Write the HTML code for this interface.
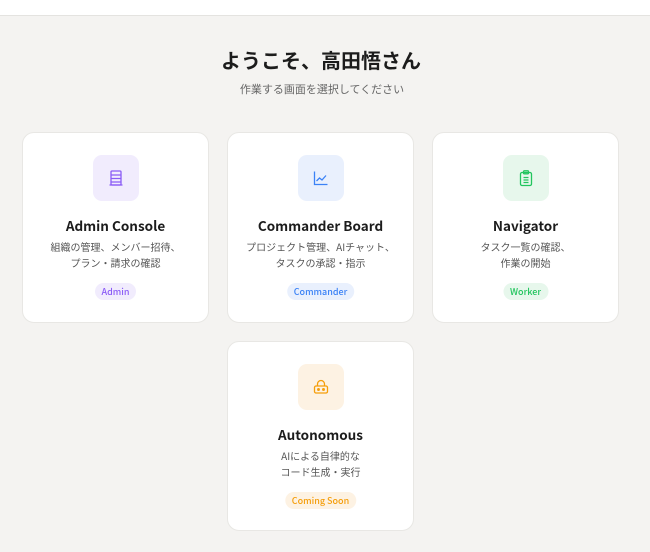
<!DOCTYPE html>
<html><head><meta charset="utf-8"><style>
*{box-sizing:border-box;margin:0;padding:0}
body{width:650px;height:552px;background:#f4f3f1;font-family:"Noto Sans CJK JP","Liberation Sans",sans-serif;position:relative;overflow:hidden}
.top{position:absolute;left:0;top:0;width:650px;height:16px;background:#fff;border-bottom:1px solid #e4e3e0}
h1{position:absolute;top:46px;left:-4px;width:650px;text-align:center;font-size:20px;font-weight:bold;color:#1c1c1c;line-height:28px}
.sub{position:absolute;top:81px;left:-3px;width:650px;text-align:center;font-size:11px;color:#666;line-height:16px}
.card{position:absolute;width:187px;height:191px;background:#fff;border:1px solid #e8e7e4;border-radius:12px;text-align:center}
.ic{position:absolute;left:70px;top:22px;width:46px;height:46px;border-radius:9px;display:flex;align-items:center;justify-content:center}
.t{position:absolute;top:82px;left:0;width:100%;font-size:13.5px;font-weight:bold;color:#1c1c1c;line-height:20px}
.d{position:absolute;top:106px;left:0;width:100%;font-size:10px;color:#555;line-height:16px}
.b{position:absolute;top:150px;left:50%;transform:translateX(-50%);font-size:9px;font-weight:500;padding:0 7px;height:17px;line-height:17px;border-radius:9px;white-space:nowrap}
</style></head><body>
<div class="top"></div>
<h1>ようこそ、高田悟さん</h1>
<div class="sub">作業する画面を選択してください</div>

<div class="card" style="left:22px;top:132px">
<div class="ic" style="background:#f1ecfd"><svg width="18" height="18" viewBox="0 0 18 18" fill="none" stroke="#8b5cf6" stroke-width="1.3"><rect x="4" y="2" width="10" height="14" rx="1"/><path d="M4 6h10M4 9.5h10M4 13h10M2.5 16h13"/></svg></div>
<div class="t">Admin Console</div>
<div class="d">組織の管理、メンバー招待、<br>プラン・請求の確認</div>
<div class="b" style="background:#f1ecfd;color:#8b5cf6">Admin</div>
</div>

<div class="card" style="left:227px;top:132px">
<div class="ic" style="background:#e9f0fd"><svg width="18" height="18" viewBox="0 0 18 18" fill="none" stroke="#3b82f6" stroke-width="1.3"><path d="M2.5 2.5v13h13"/><path d="M4.5 12l3-3 2.5 2 4-4.5"/></svg></div>
<div class="t">Commander Board</div>
<div class="d">プロジェクト管理、AIチャット、<br>タスクの承認・指示</div>
<div class="b" style="background:#e9f0fd;color:#3b82f6">Commander</div>
</div>

<div class="card" style="left:432px;top:132px">
<div class="ic" style="background:#e7f7ec"><svg width="18" height="18" viewBox="0 0 18 18" fill="none" stroke="#22c55e" stroke-width="1.3"><rect x="3.5" y="3.5" width="11" height="13" rx="1.5"/><rect x="6.5" y="1.8" width="5" height="3" rx=".8"/><path d="M6.5 8.5h5M6.5 11h5M6.5 13.5h5"/></svg></div>
<div class="t">Navigator</div>
<div class="d">タスク一覧の確認、<br>作業の開始</div>
<div class="b" style="background:#e7f7ec;color:#22c55e">Worker</div>
</div>

<div class="card" style="left:227px;top:341px;height:190px">
<div class="ic" style="background:#fdf2e3"><svg width="18" height="18" viewBox="0 0 18 18" fill="none" stroke="#f59e0b" stroke-width="1.3"><path d="M5.5 8V6a3.5 3.5 0 0 1 7 0v2"/><rect x="2.5" y="8" width="13" height="7" rx="1.5"/><circle cx="6.5" cy="11.5" r=".8" fill="#f59e0b"/><circle cx="11.5" cy="11.5" r=".8" fill="#f59e0b"/></svg></div>
<div class="t">Autonomous</div>
<div class="d">AIによる自律的な<br>コード生成・実行</div>
<div class="b" style="background:#fdf2e3;color:#f59e0b">Coming Soon</div>
</div>
</body></html>
